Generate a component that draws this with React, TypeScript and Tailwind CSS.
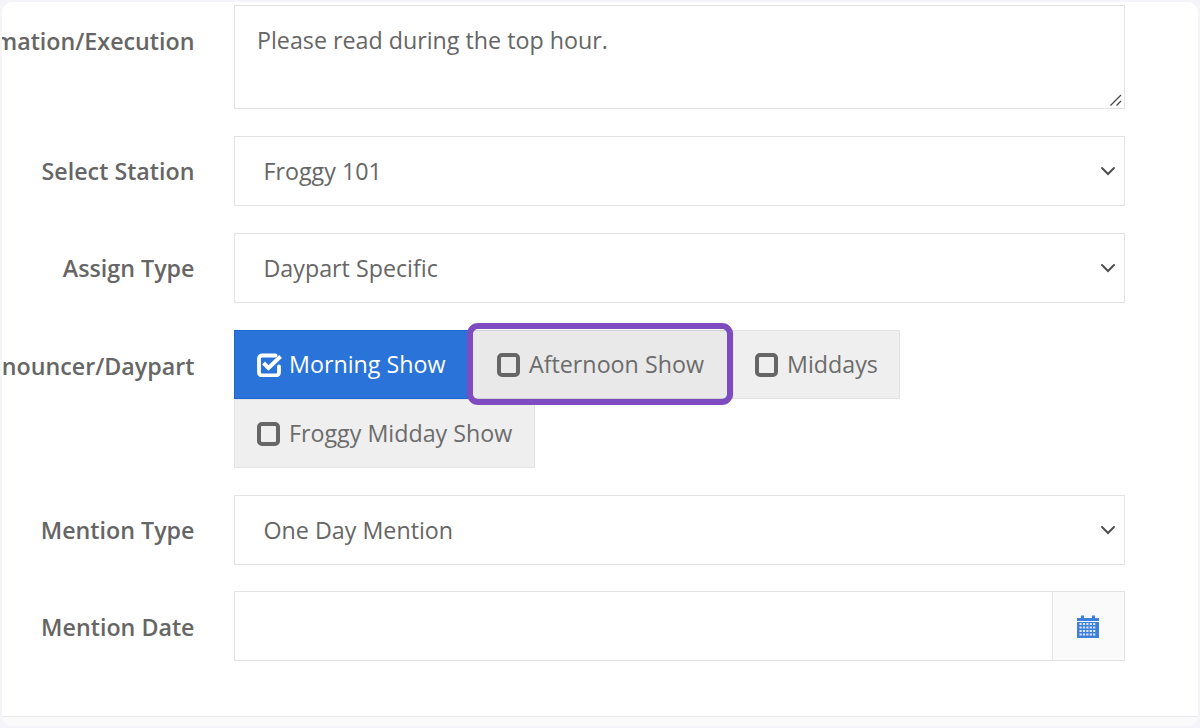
const font = "font-['Open_Sans',sans-serif]";

function Chevron() {
  return (
    <svg width="16" height="10" viewBox="0 0 16 10" className="absolute right-[8px] top-1/2 -translate-y-1/2" fill="none" stroke="#4f4f4f" strokeWidth="2" strokeLinecap="round">
      <path d="M2 2l6 6 6-6" />
    </svg>
  );
}

function Row({ label, children, className = "", labelPad = "pt-[20px]" }: { label: string; children: React.ReactNode; className?: string; labelPad?: string }) {
  return (
    <div className={`flex -ml-[2px] ${className}`}>
      <div className={`w-[194.5px] shrink-0 flex justify-end whitespace-nowrap text-[23.25px] leading-[30px] font-semibold text-[#666666] ${labelPad}`}>
        {label}
      </div>
      <div className="ml-[39.5px] w-[891px] shrink-0">{children}</div>
    </div>
  );
}

function Select({ value }: { value: string }) {
  return (
    <div className="relative h-[70px] border border-[#e3e3e3] bg-white pl-[28.5px] flex items-center text-[23.25px] text-[#666666]">
      {value}
      <Chevron />
    </div>
  );
}

function Box({ checked }: { checked?: boolean }) {
  if (checked) {
    return (
      <svg width="26" height="24" viewBox="0 0 26 24" fill="none" className="shrink-0">
        <path d="M18.5 2.5H5A3 3 0 0 0 2 5.5v14a3 3 0 0 0 3 3h14a3 3 0 0 0 3-3v-6" stroke="#fff" strokeWidth="3.8" strokeLinecap="round" />
        <path d="M6.5 10l5 5L23.5 3.5" stroke="#fff" strokeWidth="4" />
      </svg>
    );
  }
  return <span className="w-[23px] h-[24px] rounded-[5px] border-[4px] border-[#666666] shrink-0" />;
}

function Toggle({ label, checked, className = "" }: { label: string; checked?: boolean; className?: string }) {
  return (
    <div className={`h-[69px] flex items-center text-[23.25px] border ${checked ? "bg-[#2973d9] border-[#1d66cf] text-white" : "bg-[#efefef] border-[#e3e3e3] text-[#6c6c6c]"} ${className}`}>
      <Box checked={checked} />
      <span className={checked ? "ml-[6px]" : "ml-[9px]"}>{label}</span>
    </div>
  );
}

export default function App() {
  return (
    <div className={`${font} w-[1200px] h-[728px] bg-[#f4f4f9] p-[2px] overflow-hidden`}>
      <div className="relative w-[1196px] h-[724px] bg-white rounded-[10px] overflow-hidden flex flex-col">
        <div className="flex-1 pt-[3px] flex flex-col gap-[27px]">
          <Row label="Information/Execution" labelPad="pt-[21px]">
            <div className="h-[104px] border border-[#e3e3e3] pl-[22px] pt-[18px] text-[23.25px] leading-[33px] text-[#666666] relative">
              Please read during the top hour.
              <svg width="14" height="14" viewBox="0 0 14 14" className="absolute right-[1px] bottom-[1px]" stroke="#444" strokeWidth="1.2" fill="none">
                <path d="M1.5 12.5L12 2M7.5 12.5L12 8" />
              </svg>
            </div>
          </Row>
          <Row label="Select Station"><Select value="Froggy 101" /></Row>
          <Row label="Assign Type"><Select value="Daypart Specific" /></Row>
          <Row label="Announcer/Daypart" labelPad="pt-[21px]">
            <div className="relative flex flex-wrap w-[891px]">
              <Toggle label="Morning Show" checked className="w-[236px] pl-[22px]" />
              <Toggle label="Afternoon Show" className="w-[263px] pl-[26px] !bg-[#e9e9e9] !border-[#cfcfcf]" />
              <Toggle label="Middays" className="w-[167px] pl-[21px]" />
              <div className="w-full flex">
                <Toggle label="Froggy Midday Show" className="w-[301px] pl-[22px]" />
              </div>
              <div className="absolute left-[233px] top-[-7px] w-[266px] h-[82px] border-[6px] border-[#7e4cc0] rounded-[11px]" />
            </div>
          </Row>
          <Row label="Mention Type"><Select value="One Day Mention" /></Row>
          <Row label="Mention Date" className="-mt-[1px]" labelPad="pt-[21px]">
            <div className="h-[70px] border border-[#e3e3e3] flex justify-end">
              <div className="w-[72px] border-l border-[#e3e3e3] bg-[#fafafa] flex items-center justify-center pr-[2px]">
                <svg width="24" height="24" viewBox="0 0 24 24">
                  <path d="M1 4h22v20H1z" fill="#3f7fdc" />
                  <path d="M5 1.5h3V4H5zM16 1.5h3V4h-3z" fill="#3f7fdc" />
                  <path d="M1 7.5h22" stroke="#fff" strokeWidth="1" />
                  <path d="M3.5 10h17M3.5 13.5h17M3.5 17h17M3.5 20.5h17" stroke="#dce8fa" strokeWidth="2" strokeDasharray="2.2 1.2" />
                </svg>
              </div>
            </div>
          </Row>
        </div>
        <div className="h-[10px] shrink-0 border-t border-[#e8e8ec] bg-[#fafafb]" />
      </div>
    </div>
  );
}
